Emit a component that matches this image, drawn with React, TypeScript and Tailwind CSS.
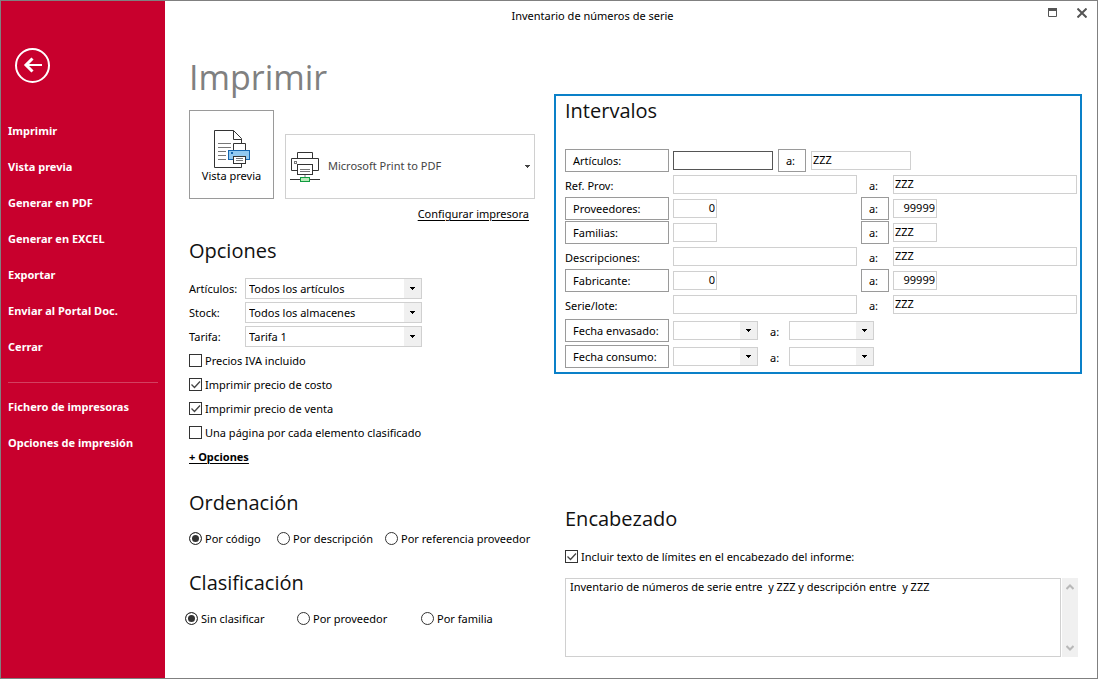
import { useState } from "react";
import type { ReactNode } from "react";

const mainActions = [
  "Imprimir",
  "Vista previa",
  "Generar en PDF",
  "Generar en EXCEL",
  "Exportar",
  "Enviar al Portal Doc.",
  "Cerrar",
];

const setupActions = ["Fichero de impresoras", "Opciones de impresión"];

const selects = [
  { id: "articulos", label: "Artículos:", value: "Todos los artículos" },
  { id: "stock", label: "Stock:", value: "Todos los almacenes" },
  { id: "tarifa", label: "Tarifa:", value: "Tarifa 1" },
];

const checks = [
  { label: "Precios IVA incluido", checked: false },
  { label: "Imprimir precio de costo", checked: true },
  { label: "Imprimir precio de venta", checked: true },
  { label: "Una página por cada elemento clasificado", checked: false },
];

type Range = { id: string; label: string; lookup?: boolean; short?: boolean; numeric?: boolean; from: string; to: string };

const ranges: Range[] = [
  { id: "ref", label: "Ref. Prov:", from: "", to: "ZZZ" },
  { id: "proveedores", label: "Proveedores:", lookup: true, short: true, numeric: true, from: "0", to: "99999" },
  { id: "familias", label: "Familias:", lookup: true, short: true, from: "", to: "ZZZ" },
  { id: "descripciones", label: "Descripciones:", from: "", to: "ZZZ" },
  { id: "fabricante", label: "Fabricante:", lookup: true, short: true, numeric: true, from: "0", to: "99999" },
  { id: "serie", label: "Serie/lote:", from: "", to: "ZZZ" },
];

const dates = [
  { id: "envasado", label: "Fecha envasado:" },
  { id: "consumo", label: "Fecha consumo:" },
];

const Arrow = () => (
  <svg width="5" height="3" viewBox="0 0 5 3" shapeRendering="crispEdges">
    <path d="M0 0h5v1H4v1H3v1H2V2H1V1H0z" fill="currentColor" />
  </svg>
);

const Heading = ({ children }: { children: ReactNode }) => (
  <h2 className="font-['Open_Sans',sans-serif] text-[20px] leading-7 text-[#111]">{children}</h2>
);

const Dropdown = ({ id, label, value, className }: { id: string; label?: string; value?: string; className: string }) => (
  <div className={`relative ${className}`}>
    <select id={id} aria-label={label} className="block h-full w-full appearance-none border border-[#d0d0d0] bg-white pl-[3px] pr-5 pt-px outline-none">
      <option>{value}</option>
    </select>
    <span className="pointer-events-none absolute inset-y-px right-px flex w-[17px] items-center justify-center bg-[#f0f0f0]">
      <Arrow />
    </span>
  </div>
);

const Check = ({ label, defaultChecked }: { label: string; defaultChecked: boolean }) => (
  <label className="flex h-6 items-center gap-[3px]">
    <span className="relative size-[13px]">
      <input type="checkbox" defaultChecked={defaultChecked} className="peer block size-[13px] appearance-none border border-[#333] bg-white" />
      <svg className="pointer-events-none absolute inset-0 hidden peer-checked:block" width="13" height="13" viewBox="0 0 13 13" fill="none" stroke="#444">
        <path d="M2.5 6.5l3 3 5.5-6" strokeWidth="1.3" />
      </svg>
    </span>
    <span className="pt-[2px]">{label}</span>
  </label>
);

const Radio = ({ name, label, defaultChecked }: { name: string; label: string; defaultChecked?: boolean }) => (
  <label className="flex h-6 items-center gap-[3px] whitespace-nowrap">
    <input
      type="radio"
      name={name}
      defaultChecked={defaultChecked}
      className="size-[13px] shrink-0 appearance-none rounded-full border border-[#333] bg-white checked:bg-[#333] checked:shadow-[inset_0_0_0_2px_white]"
    />
    <span className="pt-[2px]">{label}</span>
  </label>
);

const Field = ({ label, value, className }: { label: string; value: string; className: string }) => (
  <input aria-label={label} defaultValue={value} className={`h-[19px] min-w-0 border bg-white px-px pb-[2px] outline-none ${className}`} />
);

const LookupButton = ({ children, className }: { children: ReactNode; className: string }) => (
  <button className={`h-[23px] border border-[#9a9a9a] bg-white pt-px ${className}`}>{children}</button>
);

const PreviewIcon = () => (
  <svg width="36" height="38" viewBox="0 0 36 38" fill="none" stroke="#333">
    <path d="M27.5 33.5v4H.5V.5h19l8 8v5M19.5.5v9h8" />
    <path d="M4 13.5h13M4 17.5h13M4 21.5h8M4 25.5h8M4 29.5h8" stroke="#777" />
    <path d="M19.5 20.5v-7h12v7" fill="#fff" />
    <rect x="14.5" y="20.5" width="21" height="9" fill="#92c9f0" stroke="#1566b0" />
    <rect x="17" y="22" width="2" height="2" fill="#1566b0" stroke="none" />
    <rect x="19.5" y="26.5" width="12" height="7" fill="#fff" />
    <path d="M22 28.5h7M22 30.5h7" stroke="#777" />
  </svg>
);

const PrinterIcon = () => (
  <svg width="30" height="30" viewBox="0 0 30 30" fill="none" stroke="#333">
    <path d="M7.5 6.5v-6h15v6M7.5 18.5h-6v-12h27v12h-6" />
    <rect x="4.5" y="9.5" width="2" height="2" stroke="#777" />
    <rect x="7.5" y="12.5" width="15" height="10" fill="#fff" />
    <path d="M10 17.5h10M10 19.5h10M15 23v2" stroke="#777" />
    <path d="M0 27.5h30" />
    <rect x="10.5" y="25.5" width="9" height="4" fill="#b9eab9" stroke="#109b40" />
  </svg>
);

const Sidebar = () => (
  <aside className="w-[164px] shrink-0 bg-[#c8002d] pt-[47px] font-bold text-white">
    <button aria-label="Volver" className="ml-[14px] block">
      <svg width="35" height="35" viewBox="0 0 35 35" fill="none" stroke="#fff" strokeWidth="2">
        <circle cx="17.5" cy="17.5" r="16.5" />
        <path d="M27 17H10.5" />
        <path d="M17.5 10.5L11 17l6.500 6.500" strokeWidth="3" />
      </svg>
    </button>
    <nav className="mt-[30px] flex flex-col">
      {mainActions.map((item) => (
        <a key={item} href="#" className="flex h-9 items-center pl-[7px]">{item}</a>
      ))}
      <hr className="mx-[7px] mb-[6px] mt-[17px] border-[#d34060]" />
      {setupActions.map((item) => (
        <a key={item} href="#" className="flex h-9 items-center pl-[7px]">{item}</a>
      ))}
    </nav>
  </aside>
);

const TitleBar = () => (
  <header className="flex h-[30px] items-center">
    <h1 className="flex-1 text-center text-[11px] text-black">Inventario de números de serie</h1>
    <div className="flex w-[77px] items-center justify-end gap-5 pb-[7px] pr-[10px] text-[#555]">
      <button aria-label="Maximizar">
        <svg width="9" height="9" viewBox="0 0 9 9" fill="none" stroke="currentColor">
          <path d="M.5.5h8v8h-8z" />
          <path d="M0 1.5h9" strokeWidth="3" />
        </svg>
      </button>
      <button aria-label="Cerrar ventana">
        <svg width="10" height="10" viewBox="0 0 10 10" stroke="currentColor" strokeWidth="2">
          <path d="M.5.5l9 9M9.5.5l-9 9" />
        </svg>
      </button>
    </div>
  </header>
);

const PrintSettings = () => (
  <section className="w-[389px] shrink-0 pt-[22px]">
    <div className="pl-6 pr-[19px]">
      <h2 className="font-['Open_Sans',sans-serif] text-[34px] leading-[48px] text-[#808080]">Imprimir</h2>
      <div className="mt-[9px] flex items-end gap-[11px]">
        <button className="flex h-[89px] w-[85px] shrink-0 flex-col items-center border border-[#9a9a9a] bg-white pt-[19px] leading-4">
          <PreviewIcon />
          Vista previa
        </button>
        <div className="relative h-[65px] flex-1 text-[#444]">
          <select aria-label="Impresora" className="block h-full w-full appearance-none border border-[#d0d0d0] bg-white pb-px pl-[42px] outline-none">
            <option>Microsoft Print to PDF</option>
          </select>
          <span className="pointer-events-none absolute inset-y-0 left-[5px] right-[5px] flex items-center justify-between">
            <PrinterIcon />
            <Arrow />
          </span>
        </div>
      </div>
      <div className="mt-[7px] pr-[6px] text-right leading-4">
        <a href="#" className="underline underline-offset-2">Configurar impresora</a>
      </div>

      <div className="mt-[15px]">
        <Heading>Opciones</Heading>
      </div>
      <div className="mt-[13px] flex flex-col gap-[3px]">
        {selects.map((s) => (
          <div key={s.id} className="flex items-center">
            <label htmlFor={s.id} className="w-14 pt-px">{s.label}</label>
            <Dropdown id={s.id} value={s.value} className="h-[21px] w-[177px]" />
          </div>
        ))}
      </div>
      <div className="mt-px">
        {checks.map((c) => (
          <Check key={c.label} label={c.label} defaultChecked={c.checked} />
        ))}
      </div>
      <div className="flex h-6 items-center pt-[2px]">
        <a href="#" className="font-bold underline underline-offset-2">+ Opciones</a>
      </div>

      <div className="mt-[21px]">
        <Heading>Ordenación</Heading>
      </div>
      <div className="mt-[9px] grid grid-cols-[88px_108px_1fr]">
        <Radio name="orden" label="Por código" defaultChecked />
        <Radio name="orden" label="Por descripción" />
        <Radio name="orden" label="Por referencia proveedor" />
      </div>

      <div className="mt-[19px]">
        <Heading>Clasificación</Heading>
      </div>
    </div>
    <div className="mt-[9px] grid grid-cols-[112px_124px_1fr] pl-5">
      <Radio name="clase" label="Sin clasificar" defaultChecked />
      <Radio name="clase" label="Por proveedor" />
      <Radio name="clase" label="Por familia" />
    </div>
  </section>
);

const Intervals = () => (
  <section className="border-2 border-[#0a80c8] pb-1 pl-[9px] pr-[3px] pt-px">
    <Heading>Intervalos</Heading>
    <div className="mt-6 flex flex-col gap-px">
      <div className="flex items-center gap-1">
        <LookupButton className="w-[104px] pl-[7px] text-left">Artículos:</LookupButton>
        <div className="flex items-center gap-[5px]">
          <Field label="Artículos desde" value="" className="w-[100px] border-[#555]" />
          <LookupButton className="w-7 pr-[3px]">a:</LookupButton>
          <Field label="Artículos hasta" value="ZZZ" className="w-[100px] border-[#d0d0d0]" />
        </div>
      </div>
      {ranges.map((r) => {
        const size = `border-[#d0d0d0] ${r.short ? "w-11" : "w-full"} ${r.numeric ? "text-right" : ""}`;
        return (
          <div key={r.id} className="grid h-[23px] grid-cols-[104px_1fr_28px_1fr] items-center gap-1">
            {r.lookup ? <LookupButton className="pl-[7px] text-left">{r.label}</LookupButton> : <span className="pt-[3px]">{r.label}</span>}
            <Field label={`${r.label} desde`} value={r.from} className={size} />
            {r.lookup ? <LookupButton className="pr-[3px]">a:</LookupButton> : <span className="pr-[3px] pt-[3px] text-center">a:</span>}
            <Field label={`${r.label} hasta`} value={r.to} className={size} />
          </div>
        );
      })}
    </div>
    <div className="mt-[3px] flex flex-col gap-[3px]">
      {dates.map((d) => (
        <div key={d.id} className="flex items-center">
          <LookupButton className="mr-1 w-[104px] pl-[7px] text-left">{d.label}</LookupButton>
          <Dropdown id={`${d.id}-desde`} label={`${d.label} desde`} className="h-[19px] w-[85px]" />
          <span className="w-[31px] pl-3 pt-[3px]">a:</span>
          <Dropdown id={`${d.id}-hasta`} label={`${d.label} hasta`} className="h-[19px] w-[85px]" />
        </div>
      ))}
    </div>
  </section>
);

const HeaderText = () => {
  const [text, setText] = useState("Inventario de números de serie entre  y ZZZ y descripción entre  y ZZZ");

  return (
    <section className="mt-[131px] pl-[11px] pr-1">
      <Heading>Encabezado</Heading>
      <div className="mt-[11px]">
        <Check label="Incluir texto de límites en el encabezado del informe:" defaultChecked />
      </div>
      <div className="mt-[10px] flex h-[79px] gap-px">
        <textarea
          aria-label="Texto del encabezado"
          value={text}
          onChange={(e) => setText(e.target.value)}
          className="flex-1 resize-none overflow-hidden border border-[#d0d0d0] px-1 leading-4 outline-none"
        />
        <div className="flex w-4 flex-col items-center justify-between bg-[#f0f0f0] py-[6px] text-[#b8b8b8]">
          <svg width="8" height="6" viewBox="0 0 8 6" fill="none" stroke="currentColor" strokeWidth="2">
            <path d="M.5 5L4 1.5 7.5 5" />
          </svg>
          <svg width="8" height="6" viewBox="0 0 8 6" fill="none" stroke="currentColor" strokeWidth="2">
            <path d="M.5 1L4 4.500 7.500 1" />
          </svg>
        </div>
      </div>
    </section>
  );
};

export default function App() {
  return (
    <div className="flex min-h-screen border border-[#808080] bg-white font-['Noto_Sans','Open_Sans',sans-serif] text-[11px] text-black">
      <Sidebar />
      <main className="flex min-w-0 flex-1 flex-col">
        <TitleBar />
        <div className="flex pr-[15px]">
          <PrintSettings />
          <div className="min-w-0 flex-1 pt-[63px]">
            <Intervals />
            <HeaderText />
          </div>
        </div>
      </main>
    </div>
  );
}
